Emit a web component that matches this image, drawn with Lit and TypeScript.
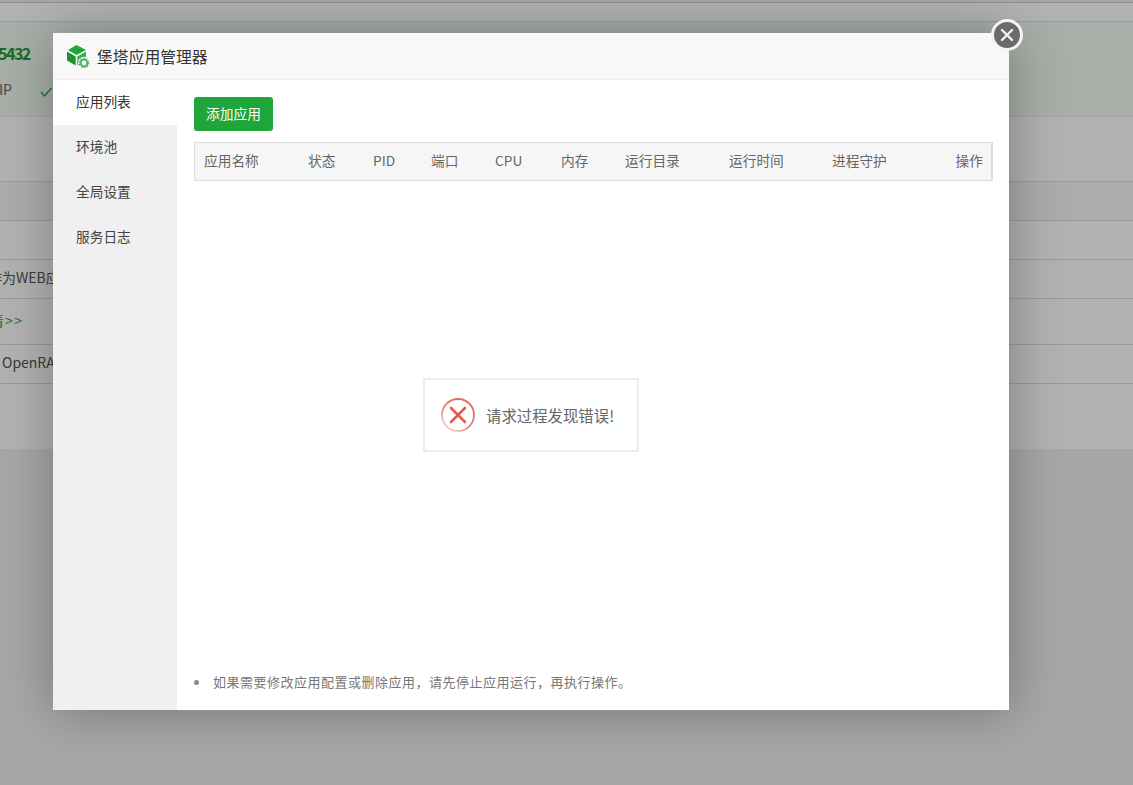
import { LitElement, html, css, svg } from "lit";
import { customElement } from "lit/decorators.js";

const HEAD = [
  "应用名称", "状态", "PID", "端口", "CPU", "内存", "运行目录", "运行时间", "进程守护", "操作",
];
const MENU = ["应用列表", "环境池", "全局设置", "服务日志"];

@customElement("app-root")
export class AppRoot extends LitElement {
  static styles = css`
    :host {
      display: block;
      position: relative;
      width: 1133px;
      height: 785px;
      overflow: hidden;
      font-family: "Noto Sans CJK SC", "Open Sans", sans-serif;
      font-size: 14px;
      color: #555;
      background: #f0f0f0;
    }
    .page { display: flex; flex-direction: column; height: 449px; background: #fff; }
    .top { height: 2px; background: #f0f0f0; border-bottom: 1px solid #ccc; }
    .nav { height: 18px; background: #fff; border-bottom: 1px solid #ddd; }
    .banner {
      height: 95px; background: #f1f9f1; border-bottom: 1px solid #e4ede4;
      display: flex; flex-direction: column; gap: 16px; padding-top: 21px; box-sizing: border-box;
    }
    .port { margin-left: -2px; font-weight: 700; font-size: 16px; letter-spacing: -1.5px; line-height: 20px; color: #1c9a34; }
    .ip { display: flex; align-items: center; gap: 28px; margin-left: -1px; line-height: 20px; color: #666; }
    .ip svg { margin-top: 6px; }
    .gap { height: 64px; border-bottom: 1px solid #ddd; }
    .row {
      height: 38px; box-sizing: content-box; border-bottom: 1px solid #ddd;
      display: flex; align-items: center; white-space: nowrap;
    }
    .row.tint { background: #f6f6f6; }
    .row.tall { height: 45px; }
    .row span { margin-bottom: 4px; }
    .clip { margin-left: -12px; }
    .link { color: #20a53a; margin-left: -26px; letter-spacing: 1.5px; }
    .open { margin-left: 2px; }
    .mask { position: absolute; inset: 0; background: rgba(0, 0, 0, 0.3); }

    .modal {
      position: absolute; left: 53px; top: 33px; width: 956px; height: 677px;
      background: #fff; display: flex; flex-direction: column;
      box-shadow: 1px 1px 50px rgba(0, 0, 0, 0.3);
    }
    .title {
      height: 47px; box-sizing: border-box; flex: none; background: #f8f8f8; border-bottom: 1px solid #eee;
      display: flex; align-items: center; gap: 7px; padding-left: 13px;
      font-size: 15.8px; color: #333;
    }
    .body { flex: 1; display: flex; min-height: 0; }
    .side { width: 124px; background: #f0f0f0; display: flex; flex-direction: column; }
    .side div { height: 45px; line-height: 43px; padding-left: 23px; font-size: 13.7px; color: #444; }
    .side .on { background: #fff; color: #333; }
    .main { flex: 1; display: flex; flex-direction: column; padding: 17px 16px 0 17px; }
    .btn {
      align-self: flex-start; width: 79px; height: 34px; line-height: 32px; text-align: center;
      background: #20a53a; color: #fff; border-radius: 3px; font-size: 13.7px;
    }
    .thead {
      margin-top: 11px; height: 39px; box-sizing: border-box; width: 799px;
      background: #f6f6f6; border: 1px solid #ddd; border-right-width: 2px;
      display: grid; grid-template-columns: 104px 65px 58px 64px 66px 64px 104px 103px 1fr auto;
      align-items: center; padding: 0 8px 4px 9px; font-size: 13.7px; color: #666;
    }
    .spacer { flex: 1; }
    .note {
      display: flex; align-items: center; gap: 14px; height: 18px; margin-bottom: 20px;
      font-size: 13px; letter-spacing: 0.5px; color: #777;
    }
    .dot { width: 5px; height: 5px; border-radius: 50%; background: #888; flex: none; margin-top: 2px; }

    .close {
      position: absolute; left: 991px; top: 19px; width: 32px; height: 32px; box-sizing: border-box;
      border-radius: 50%; background: #6b6b6b; border: 3px solid #f4f4f4;
      display: flex; align-items: center; justify-content: center;
    }
    .toast {
      position: absolute; left: 423px; top: 378px; width: 216px; height: 74px; box-sizing: border-box;
      background: #fff; border: 2px solid #ececec;
      display: flex; align-items: center; gap: 10px; padding-left: 15px;
      font-size: 15.4px; color: #666; white-space: nowrap;
    }
    .toast span { margin-bottom: 1px; }
    svg { display: block; flex: none; }
  `;

  private logo() {
    return svg`<svg width="24" height="24" viewBox="0 0 24 24">
      <path d="M10.500 1 L20 6 L10.500 11 L2 6 Z" fill="#22a53c"/>
      <path d="M1 7.500 L9.700 12.400 V21.500 L1 16.600 Z" fill="#1c9434"/>
      <path d="M11.300 12.400 L20 7.500 V13 A6 6 0 0 0 12.500 20.800 L11.300 21.500 Z" fill="#2bb347"/>
      <circle cx="18" cy="19" r="3.400" fill="none" stroke="#4cb364" stroke-width="2"/>
      <circle cx="18" cy="19" r="4.800" fill="none" stroke="#4cb364" stroke-width="1.200" stroke-dasharray="1.500 1.500"/>
    </svg>`;
  }

  private closeIcon() {
    return svg`<svg width="14" height="14" viewBox="0 0 14 14">
      <path d="M2 2 L12 12 M12 2 L2 12" stroke="#f2f2f2" stroke-width="2.400" stroke-linecap="round"/>
    </svg>`;
  }

  private errIcon() {
    return svg`<svg width="36" height="36" viewBox="0 0 36 36">
      <defs>
        <linearGradient id="ring" x1="0.9" y1="0.1" x2="0.3" y2="0.9">
          <stop offset="0" stop-color="#e2655e"/>
          <stop offset="0.7" stop-color="#e8827c"/>
          <stop offset="1" stop-color="#f3c4c0"/>
        </linearGradient>
      </defs>
      <circle cx="18" cy="18" r="16" fill="none" stroke="url(#ring)" stroke-width="1.800"/>
      <path d="M11 11 L25 25 M25 11 L11 25" stroke="#e9574f" stroke-width="2.600" stroke-linecap="round"/>
    </svg>`;
  }

  render() {
    return html`
      <div class="page">
        <div class="top"></div>
        <div class="nav"></div>
        <div class="banner">
          <div class="port">5432</div>
          <div class="ip">
            <span>IP</span>
            <svg width="12" height="10" viewBox="0 0 12 10"><path d="M1 5 L4.500 9 L11.500 1" fill="none" stroke="#20a53a" stroke-width="1.200"/></svg>
          </div>
        </div>
        <div class="gap"></div>
        <div class="row tint"></div>
        <div class="row"></div>
        <div class="row"><span class="clip">作为WEB应用</span></div>
        <div class="row tall"><span class="link">详情>></span></div>
        <div class="row"><span class="open">OpenRASP</span></div>
      </div>
      <div class="mask"></div>
      <div class="modal">
        <div class="title">${this.logo()}<span>堡塔应用管理器</span></div>
        <div class="body">
          <div class="side">
            ${MENU.map((m, i) => html`<div class=${i === 0 ? "on" : ""}>${m}</div>`)}
          </div>
          <div class="main">
            <div class="btn">添加应用</div>
            <div class="thead">${HEAD.map((h) => html`<span>${h}</span>`)}</div>
            <div class="spacer"></div>
            <div class="note"><span class="dot"></span><span>如果需要修改应用配置或删除应用，请先停止应用运行，再执行操作。</span></div>
          </div>
        </div>
      </div>
      <div class="close">${this.closeIcon()}</div>
      <div class="toast">${this.errIcon()}<span>请求过程发现错误!</span></div>
    `;
  }
}
